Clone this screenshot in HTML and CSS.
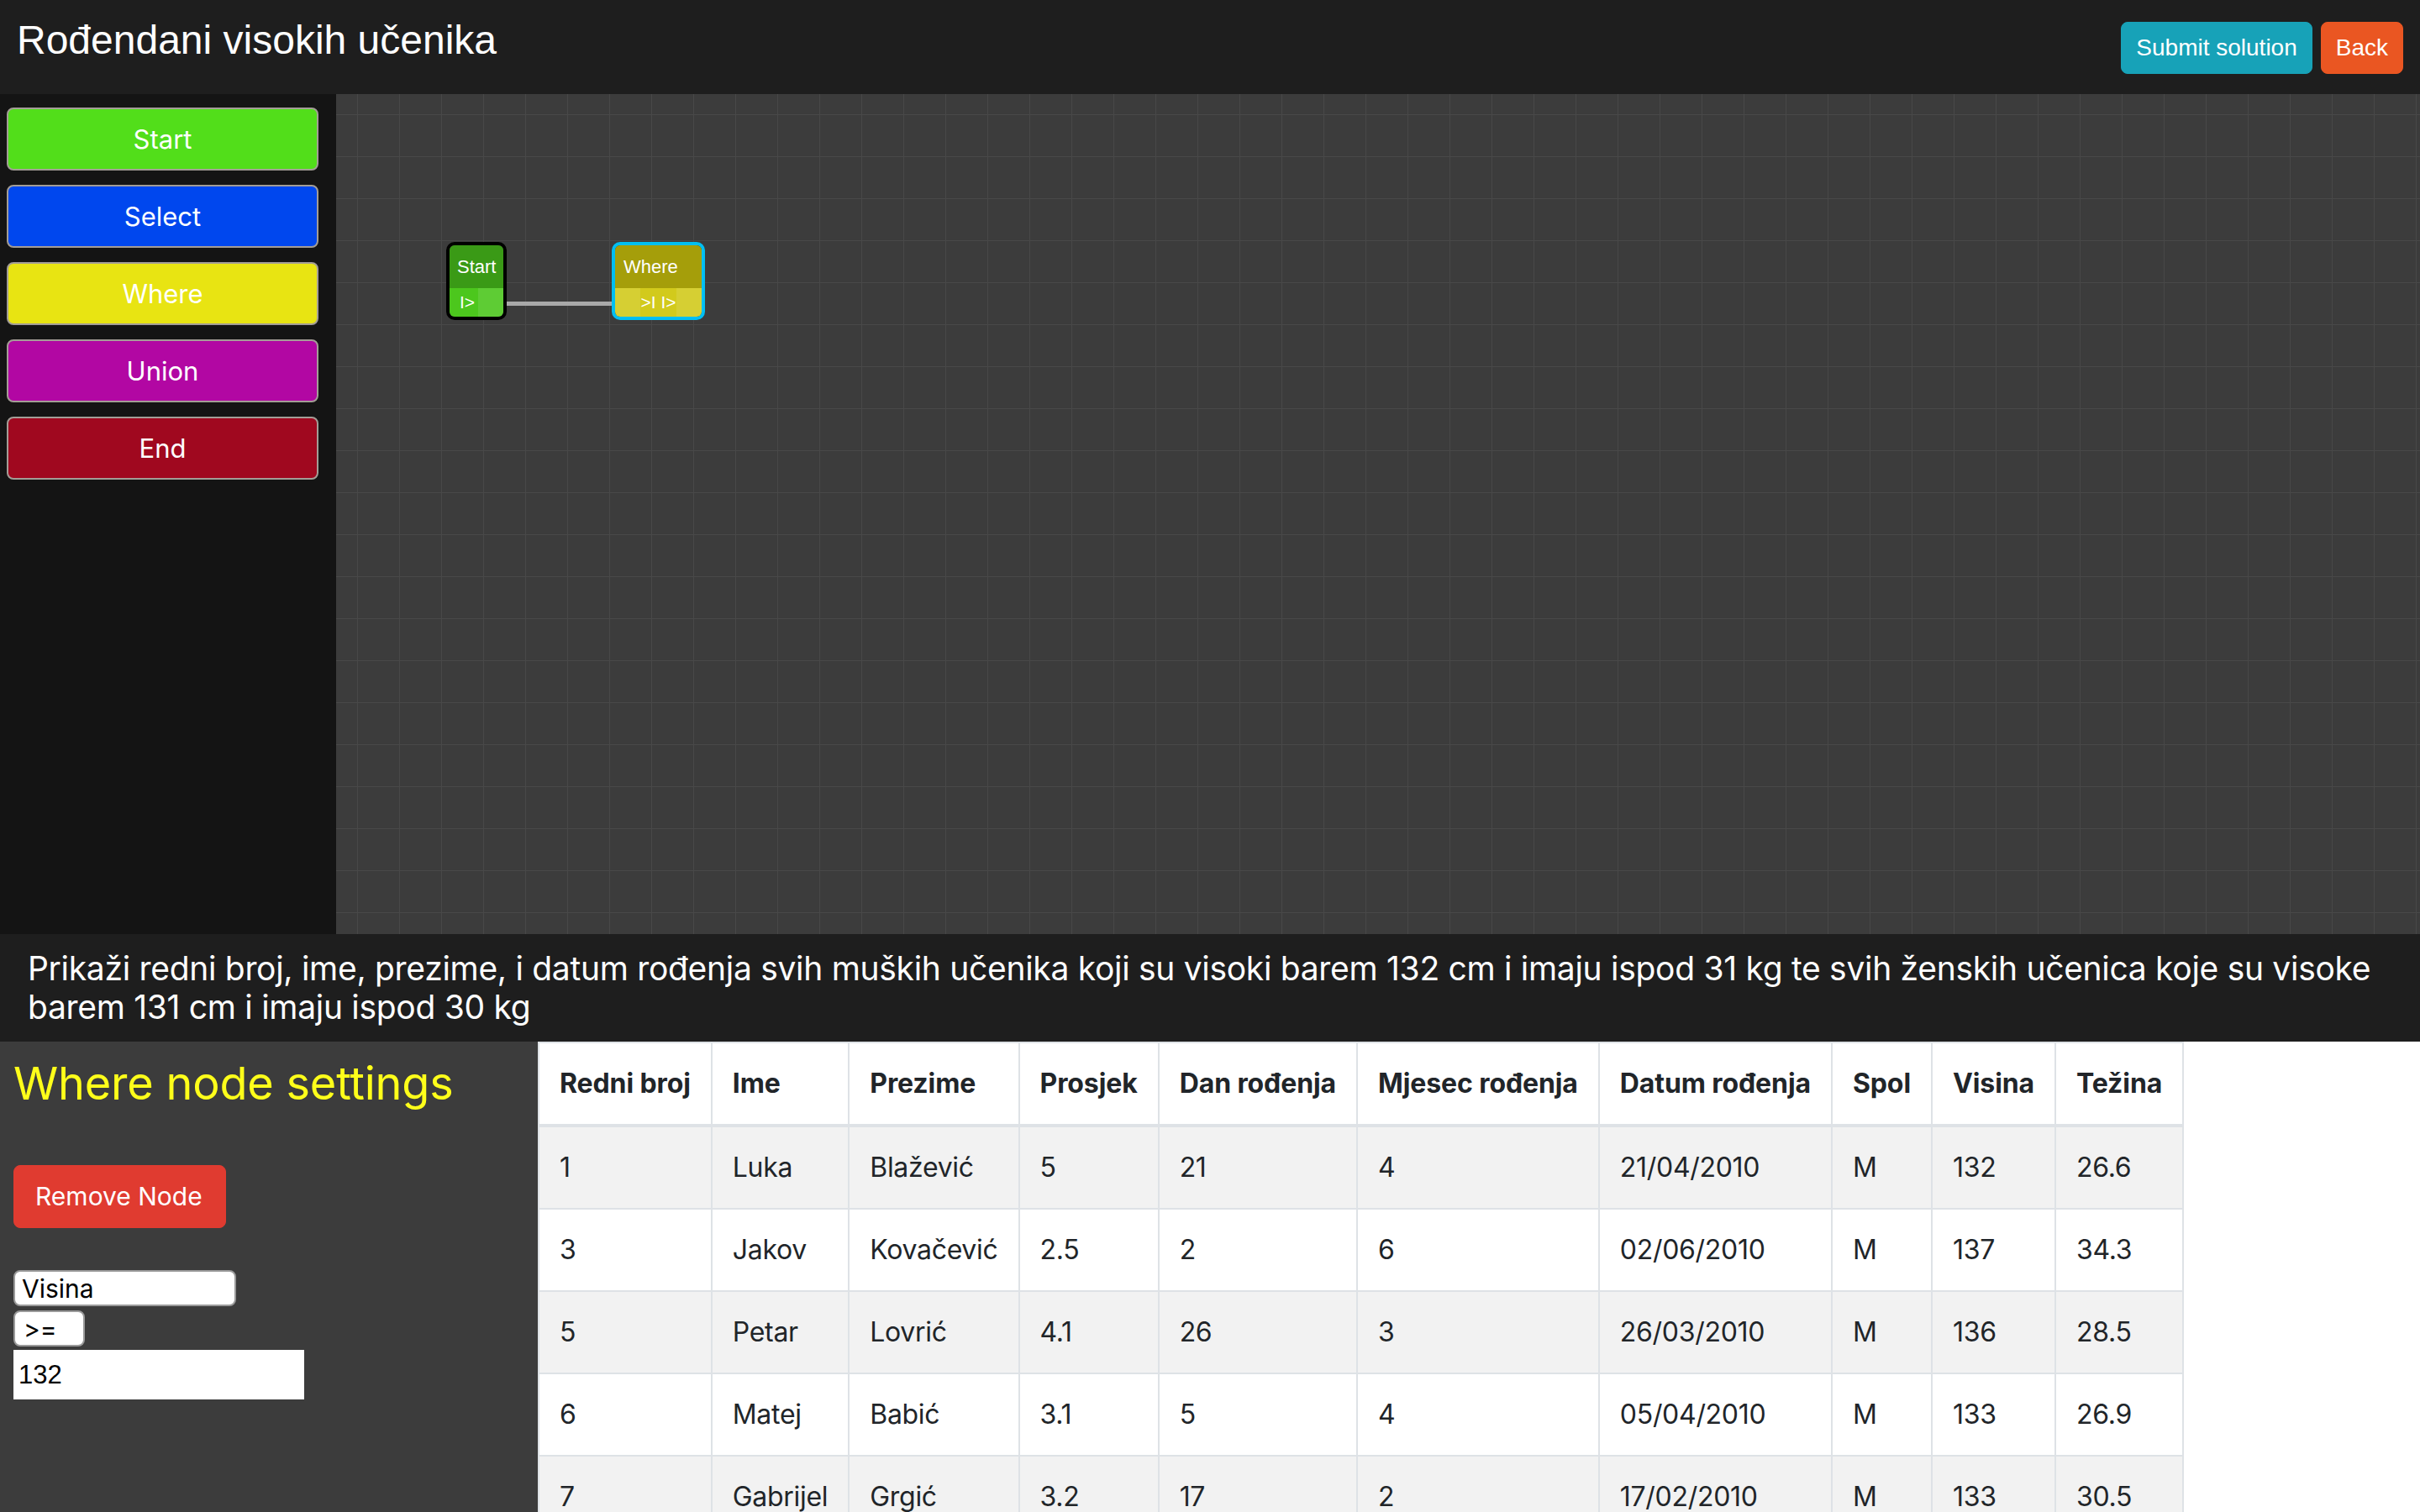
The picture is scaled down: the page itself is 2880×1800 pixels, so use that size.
FILE: index.html
```html
<!DOCTYPE html>
<html lang="hr">
<head>
<meta charset="utf-8">
<title>Rođendani visokih učenika</title>
<link rel="stylesheet" href="styles.css">
</head>
<body>
<div class="app">
  <header class="topbar">
    <h1 class="title">Rođendani visokih učenika</h1>
    <div class="actions">
      <button class="btn-top btn-submit">Submit solution</button>
      <button class="btn-top btn-back">Back</button>
    </div>
  </header>

  <div class="workspace">
    <aside class="palette">
      <button class="pal-btn pal-start">Start</button>
      <button class="pal-btn pal-select">Select</button>
      <button class="pal-btn pal-where">Where</button>
      <button class="pal-btn pal-union">Union</button>
      <button class="pal-btn pal-end">End</button>
    </aside>
    <div class="canvas">
      <div class="edge"></div>
      <div class="node node-start">
        <div class="node-head">Start</div>
        <div class="node-foot">
          <span class="node-io">I&gt;</span>
          <span class="socket"></span>
        </div>
      </div>
      <div class="node node-where">
        <div class="node-head">Where</div>
        <div class="node-foot">
          <span class="socket"></span>
          <span class="node-io">&gt;I I&gt;</span>
          <span class="socket"></span>
        </div>
      </div>
    </div>
  </div>

  <div class="task">
    <p class="task-text">Prikaži redni broj, ime, prezime, i datum rođenja svih muških učenika koji su visoki barem 132 cm i imaju ispod 31 kg te svih ženskih učenica koje su visoke barem 131 cm i imaju ispod 30 kg</p>
  </div>

  <div class="bottom">
    <section class="settings">
      <h2 class="settings-title">Where node settings</h2>
      <button class="btn-remove">Remove Node</button>
      <select class="field field-col"><option>Visina</option></select>
      <select class="field field-op"><option>&gt;=</option></select>
      <input class="value-input" type="text" value="132">
    </section>
    <div class="results">
      <table class="data-table">
        <thead>
          <tr>
            <th>Redni broj</th><th>Ime</th><th>Prezime</th><th>Prosjek</th><th>Dan rođenja</th><th>Mjesec rođenja</th><th>Datum rođenja</th><th>Spol</th><th>Visina</th><th>Težina</th>
          </tr>
        </thead>
        <tbody>
          <tr><td>1</td><td>Luka</td><td>Blažević</td><td>5</td><td>21</td><td>4</td><td>21/04/2010</td><td>M</td><td>132</td><td>26.6</td></tr>
          <tr><td>3</td><td>Jakov</td><td>Kovačević</td><td>2.5</td><td>2</td><td>6</td><td>02/06/2010</td><td>M</td><td>137</td><td>34.3</td></tr>
          <tr><td>5</td><td>Petar</td><td>Lovrić</td><td>4.1</td><td>26</td><td>3</td><td>26/03/2010</td><td>M</td><td>136</td><td>28.5</td></tr>
          <tr><td>6</td><td>Matej</td><td>Babić</td><td>3.1</td><td>5</td><td>4</td><td>05/04/2010</td><td>M</td><td>133</td><td>26.9</td></tr>
          <tr><td>7</td><td>Gabrijel</td><td>Grgić</td><td>3.2</td><td>17</td><td>2</td><td>17/02/2010</td><td>M</td><td>133</td><td>30.5</td></tr>
        </tbody>
      </table>
    </div>
  </div>
</div>
</body>
</html>
```

FILE: styles.css
```css
html, body {
  margin: 0;
  padding: 0;
  height: 100%;
  overflow: hidden;
}

body {
  font-family: Inter, "Noto Sans", sans-serif;
  background: #1e1e1e;
}

.app {
  display: flex;
  flex-direction: column;
  height: 1800px;
}

/* ---------- top bar ---------- */
.topbar {
  height: 112px;
  flex: 0 0 112px;
  background: #1e1e1e;
  display: flex;
  justify-content: space-between;
  align-items: flex-start;
  padding: 0 20px;
  box-sizing: border-box;
}

.title {
  margin: 0;
  padding-top: 20px;
  font-family: "Liberation Sans", Arial, sans-serif;
  font-weight: normal;
  font-size: 48px;
  line-height: 55px;
  color: #ffffff;
}

.actions {
  display: flex;
  gap: 10px;
  padding-top: 26px;
}

.btn-top {
  font-family: "Liberation Sans", Arial, sans-serif;
  font-size: 28px;
  line-height: 42px;
  padding: 9px 17px;
  border: 1px solid transparent;
  border-radius: 8px;
  color: #ffffff;
  cursor: pointer;
}

.btn-submit { background: #17a2b8; border-color: #17a2b8; }
.btn-back { background: #ea5622; border-color: #ea5622; }

/* ---------- workspace ---------- */
.workspace {
  flex: 0 0 1000px;
  display: flex;
}

.palette {
  width: 400px;
  flex: 0 0 400px;
  background: #141414;
  box-sizing: border-box;
  padding: 16px 21px 0 8px;
  display: flex;
  flex-direction: column;
  gap: 17px;
}

.pal-btn {
  display: block;
  width: 100%;
  font-family: Inter, "Noto Sans", sans-serif;
  font-size: 31px;
  line-height: 47px;
  padding: 12px 0;
  border: 2px solid #a39d96;
  border-radius: 8px;
  color: #ffffff;
  text-align: center;
}

.pal-start { background: #52de1a; }
.pal-select { background: #0047ee; }
.pal-where { background: #e8e412; }
.pal-union { background: #b207a3; }
.pal-end { background: #a0081f; }

.canvas {
  flex: 1;
  position: relative;
  background-color: #3c3c3c;
  background-image:
    linear-gradient(to right, #484848 1px, transparent 1px),
    linear-gradient(to bottom, #484848 1px, transparent 1px);
  background-size: 50px 50px;
  background-position: 25px 24px;
  overflow: hidden;
}

.edge {
  position: absolute;
  left: 203px;
  top: 247px;
  width: 126px;
  height: 5px;
  background: #a9a9a9;
}

.node {
  position: absolute;
  top: 176px;
  border: 4px solid #000;
  border-radius: 10px;
  overflow: hidden;
  font-family: "Liberation Sans", Arial, sans-serif;
  color: #ffffff;
}

.node-start { left: 131px; width: 64px; border-color: #000000; }
.node-where { left: 328px; width: 103px; border-color: #00bff2; }

.node-head {
  height: 51px;
  line-height: 51px;
  font-size: 22px;
  padding: 0 9px;
}

.node-foot {
  height: 34px;
  display: flex;
  align-items: stretch;
  font-size: 21px;
  line-height: 34px;
}

.node-io {
  flex: 1;
  text-align: center;
}

.socket {
  width: 30px;
  flex: 0 0 30px;
  background: rgba(255, 255, 255, 0.1);
}

.node-start .node-head { background: #3a9a16; }
.node-start .node-foot { background: #4cc71d; }
.node-start .node-io { padding-left: 8px; }
.node-where .node-head { background: #a59e0a; padding-left: 10px; }
.node-where .node-foot { background: #d2ca1c; }

/* ---------- task ---------- */
.task {
  flex: 0 0 auto;
  background: #1e1e1e;
  padding: 18px 33px;
}

.task-text {
  margin: 0;
  font-size: 39px;
  letter-spacing: -0.3px;
  line-height: 46px;
  color: #ffffff;
}

/* ---------- bottom ---------- */
.bottom {
  flex: 1;
  display: flex;
  min-height: 0;
  overflow: hidden;
}

.settings {
  width: 640px;
  flex: 0 0 640px;
  background: #3c3c3c;
  box-sizing: border-box;
  padding: 16px 16px 0 16px;
  display: flex;
  flex-direction: column;
  align-items: flex-start;
}

.settings-title {
  margin: 0;
  font-weight: normal;
  font-size: 54px;
  letter-spacing: -0.2px;
  line-height: 67px;
  color: #ffff1a;
}

.btn-remove {
  margin-top: 64px;
  font-family: Inter, "Noto Sans", sans-serif;
  font-size: 30px;
  line-height: 47px;
  padding: 13px 27px 13px 25px;
  border: 1px solid #e03b30;
  border-radius: 8px;
  background: #e03b30;
  color: #ffffff;
}

.field {
  -webkit-appearance: none;
  appearance: none;
  box-sizing: border-box;
  height: 43px;
  background: #ffffff;
  border: 2px solid #9a9a9a;
  border-radius: 8px;
  font-family: Inter, "Noto Sans", sans-serif;
  font-size: 30px;
  line-height: 38px;
  color: #000000;
  padding: 0 8px;
}

.field-col { margin-top: 50px; width: 265px; }
.field-op { margin-top: 5px; width: 85px; padding-left: 10px; }

.value-input {
  margin-top: 4px;
  box-sizing: border-box;
  width: 346px;
  height: 59px;
  border: none;
  outline: none;
  background: #ffffff;
  padding: 0 6px;
  font-family: "Liberation Sans", Arial, sans-serif;
  font-size: 31px;
  color: #000000;
}

.results {
  flex: 1;
  background: #ffffff;
  overflow: hidden;
}

.data-table {
  border-collapse: collapse;
  color: #212529;
  font-size: 32px;
  line-height: 48px;
}

.data-table th,
.data-table td {
  border: 2px solid #dee2e6;
  padding: 24px;
  text-align: left;
  vertical-align: top;
  white-space: nowrap;
}

.data-table td {
  letter-spacing: -0.3px;
}

.data-table th {
  font-weight: bold;
  letter-spacing: -0.1px;
}

.data-table thead th {
  border-bottom-width: 4px;
}

.data-table tbody tr:nth-child(odd) {
  background: #f2f2f2;
}
```
